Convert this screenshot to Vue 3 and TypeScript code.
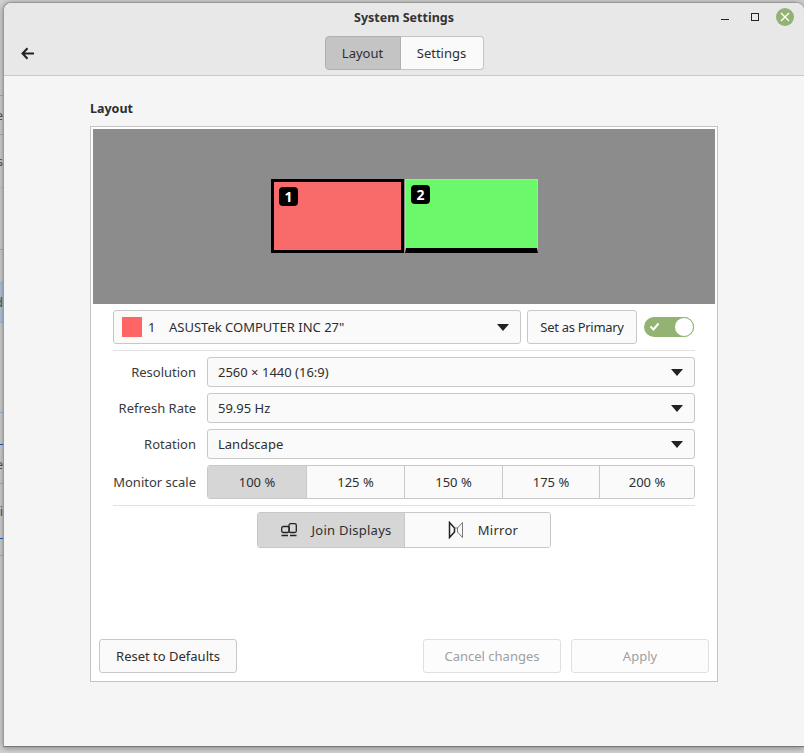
<script setup lang="ts">
import { ref } from 'vue';

interface Monitor {
  id: number;
  colour: string;
  left: number;
  active: boolean;
}

interface BehindRow {
  height: number;
  text: string;
  background?: string;
  line: string;
}

const monitors = ref<Monitor[]>([
  { id: 1, colour: '#f96b6b', left: 178, active: true },
  { id: 2, colour: '#6bf96b', left: 312, active: false },
]);

const scales = ['100 %', '125 %', '150 %', '175 %', '200 %'];
const currentScale = ref('100 %');

const rows = [
  { label: 'Resolution', value: '2560 × 1440 (16:9)' },
  { label: 'Refresh Rate', value: '59.95 Hz' },
  { label: 'Rotation', value: 'Landscape' },
];

// the window behind: only a few pixels of its list show at the left edge
const behind: BehindRow[] = [
  { height: 95, text: '', line: '#b0b0b0' },
  { height: 38, text: 'e', line: '#b0b0b0' },
  { height: 52, text: 's', line: '#c4c4c4' },
  { height: 61, text: '', line: '#b0b0b0' },
  { height: 32, text: '', line: '#a8bccf' },
  { height: 39, text: 'd', background: '#b5c9dc', line: '#a8bccf' },
  { height: 89, text: '', line: '#9dbbd8' },
  { height: 31, text: '', line: '#1a5fb4' },
  { height: 38, text: 'e', line: '#b0b0b0' },
  { height: 54, text: 'i', line: '#1a5fb4' },
  { height: 16, text: '', line: '#b0b0b0' },
];
</script>

<template>
  <div class="desktop">
    <div class="behind-left">
      <span
        v-for="(row, i) in behind"
        :key="i"
        class="behind-row"
        :style="{ height: row.height + 'px', lineHeight: row.height + 'px', background: row.background, borderBottomColor: row.line }"
      >{{ row.text }}</span>
    </div>
    <div class="window">
      <header class="titlebar">
        <div class="title-row">
          <span class="title">System Settings</span>
          <div class="controls">
            <span class="ctl-min"></span>
            <span class="ctl-max"></span>
            <span class="ctl-close">
              <svg width="12" height="12" viewBox="0 0 12 12">
                <path d="M2 2l8 8M10 2l-8 8" stroke="#fff" stroke-width="1.4" fill="none" />
              </svg>
            </span>
          </div>
        </div>
        <div class="tool-row">
          <svg class="back" width="13" height="13" viewBox="0 0 13 13">
            <path d="M13 6.500H1.500M6.500 1.200L1.500 6.500l5 5.300" stroke="#222" stroke-width="2" fill="none" />
          </svg>
          <div class="switcher">
            <button class="sw-btn on">Layout</button>
            <button class="sw-btn">Settings</button>
          </div>
        </div>
      </header>

      <main class="content">
        <p class="heading">Layout</p>
        <section class="frame">
          <div class="canvas">
            <div
              v-for="m in monitors"
              :key="m.id"
              class="monitor"
              :class="{ active: m.active }"
              :style="{ left: m.left + 'px', background: m.colour }"
            >
              <span class="badge">{{ m.id }}</span>
            </div>
          </div>

          <div class="settings">
            <div class="monitor-row">
              <div class="select monitor-select">
                <span class="swatch"></span>
                <span class="mon-num">1</span>
                <span class="mon-name">ASUSTek COMPUTER INC 27"</span>
                <span class="arrow"></span>
              </div>
              <button class="btn primary-btn">Set as Primary</button>
              <div class="switch">
                <svg class="check" width="11" height="9" viewBox="0 0 11 9">
                  <path d="M1.500 4.500l3 3 5-6" stroke="#fff" stroke-width="2" fill="none" />
                </svg>
                <span class="knob"></span>
              </div>
            </div>
            <hr class="sep" />
            <div v-for="r in rows" :key="r.label" class="form-row">
              <label class="form-label">{{ r.label }}</label>
              <div class="select">
                <span>{{ r.value }}</span>
                <span class="arrow"></span>
              </div>
            </div>
            <div class="form-row row-scale">
              <label class="form-label">Monitor scale</label>
              <div class="segments">
                <button
                  v-for="s in scales"
                  :key="s"
                  class="segment"
                  :class="{ on: s === currentScale }"
                >{{ s }}</button>
              </div>
            </div>
            <hr class="sep" />
            <div class="mode-row">
              <div class="modes">
                <button class="mode on">
                  <svg width="16" height="14" viewBox="0 0 16 14" fill="none" stroke="#222">
                    <rect x="0.700" y="3.500" width="7.500" height="6" rx="1.500" stroke-width="1.300" />
                    <rect x="8" y="0.700" width="7.300" height="8.800" rx="1.500" stroke-width="1.300" />
                    <path d="M0.500 12.500h6.500M9 12.500h6.500" stroke-width="1.500" />
                  </svg>
                  <span>Join Displays</span>
                </button>
                <button class="mode">
                  <svg width="16" height="18" viewBox="0 0 16 18" fill="none">
                    <path d="M1.500 1.500v15l5-5.500v-4zM6.500 7v4" stroke="#222" stroke-width="1.500" />
                    <path d="M14.500 1.500v15l-5-5.500v-4zM1.500 1.500h0M6.500 7L9.500 7" stroke="#777" stroke-width="1" />
                  </svg>
                  <span>Mirror</span>
                </button>
              </div>
            </div>
          </div>

          <footer class="footer">
            <button class="btn foot-btn">Reset to Defaults</button>
            <div class="foot-right">
              <button class="btn foot-btn" disabled>Cancel changes</button>
              <button class="btn foot-btn" disabled>Apply</button>
            </div>
          </footer>
        </section>
      </main>
    </div>
  </div>
</template>

<style>
html,
body {
  margin: 0;
  padding: 0;
  background: #c9c9c9;
}
</style>

<style scoped>
.desktop {
  display: flex;
  width: 804px;
  height: 753px;
  overflow: hidden;
  background: #d2d2d2;
  font-family: "Noto Sans", "Open Sans", sans-serif;
  font-size: 13px;
  color: #2e2e2e;
}

.behind-left {
  width: 3px;
  flex: none;
  direction: rtl;
  overflow: hidden;
  color: #555;
  font-size: 13px;
}

.behind-row {
  display: block;
  width: 3px;
  white-space: nowrap;
  border-bottom: 1px solid #b0b0b0;
}

.window {
  position: relative;
  flex: 1;
  margin: 2px 0 6px 0;
  display: flex;
  flex-direction: column;
  border: 1px solid #9a9a9a;
  border-right: none;
  border-bottom-color: #777;
  border-radius: 8px 8px 0 0;
  background: #f5f5f5;
  box-shadow: 0 1px 6px rgba(0, 0, 0, 0.4);
  box-sizing: border-box;
}

.titlebar {
  height: 73px;
  flex: none;
  box-sizing: border-box;
  background: #e8e8e8;
  border-bottom: 1px solid #c9c9c9;
  border-radius: 8px 8px 0 0;
  padding: 0 0 5px;
  display: flex;
  flex-direction: column;
}

.title-row {
  position: relative;
  height: 33px;
  box-sizing: border-box;
  padding-bottom: 4px;
  display: flex;
  align-items: center;
  justify-content: center;
}

.title {
  font-weight: 700;
  font-size: 12.5px;
  color: #333;
}

.controls {
  position: absolute;
  right: 10px;
  top: 5px;
  display: flex;
  align-items: center;
}

.ctl-min {
  width: 8px;
  height: 0;
  margin-top: 4px;
  border-top: 1px solid #222;
}

.ctl-max {
  width: 6px;
  height: 6px;
  margin-left: 22px;
  border: 1px solid #222;
}

.ctl-close {
  width: 18px;
  height: 18px;
  margin-left: 17px;
  border-radius: 50%;
  background: #92b372;
  display: flex;
  align-items: center;
  justify-content: center;
}

.tool-row {
  position: relative;
  flex: 1;
  display: flex;
  align-items: center;
  justify-content: center;
}

.back {
  position: absolute;
  left: 17px;
  top: 11px;
}

.switcher {
  display: flex;
}

.sw-btn {
  font: inherit;
  height: 34px;
  padding: 0;
  background: #fafafa;
  border: 1px solid #c4c4c4;
  color: #2e2e2e;
  width: 83px;
  border-radius: 0 4px 4px 0;
  border-left: none;
}

.sw-btn.on {
  width: 76px;
  background: #c4c4c4;
  border: 1px solid #b0b0b0;
  border-radius: 4px 0 0 4px;
}

.content {
  flex: 1;
  padding: 0 86px 0 86px;
  min-height: 0;
}

.heading {
  margin: 0;
  height: 50px;
  line-height: 16px;
  padding-top: 25px;
  box-sizing: border-box;
  font-weight: 700;
  font-size: 12.5px;
  color: #2e2e2e;
}

.frame {
  width: 628px;
  height: 556px;
  box-sizing: border-box;
  background: #fff;
  border: 1px solid #c4c4c4;
  padding: 2px;
  display: flex;
  flex-direction: column;
}

.canvas {
  position: relative;
  height: 175px;
  flex: none;
  background: #8c8c8c;
}

.monitor {
  position: absolute;
  top: 50px;
  width: 133px;
  height: 74px;
  box-sizing: border-box;
  border-top: 1px solid #c8c8c8;
  border-left: 1px solid #c8c8c8;
  border-right: 1px solid #c8c8c8;
  border-bottom: 5px solid #000;
}

.monitor.active {
  border: 3px solid #000;
}

.badge {
  position: absolute;
  left: 5px;
  top: 5px;
  width: 19px;
  height: 19px;
  border-radius: 4px;
  background: #000;
  color: #fff;
  font-weight: 700;
  font-size: 14px;
  line-height: 19px;
  text-align: center;
}

.settings {
  flex: 1;
  padding: 6px 20px 0;
}

.monitor-row {
  display: flex;
  align-items: center;
  height: 34px;
}

.select {
  flex: 1;
  height: 100%;
  box-sizing: border-box;
  display: flex;
  align-items: center;
  padding: 0 11px 0 10px;
  background: #fafafa;
  border: 1px solid #c8c8c8;
  border-radius: 3px;
  color: #2e2e2e;
}

.monitor-select {
  width: 408px;
  flex: none;
  padding-left: 8px;
}

.swatch {
  width: 20px;
  height: 20px;
  background: #ff6565;
  margin-right: 6px;
}

.mon-num {
  width: 21px;
}

.arrow {
  margin-left: auto;
  width: 0;
  height: 0;
  border-left: 6px solid transparent;
  border-right: 6px solid transparent;
  border-top: 7px solid #222;
}

.btn {
  font: inherit;
  background: #fafafa;
  border: 1px solid #c8c8c8;
  border-radius: 3px;
  color: #2e2e2e;
  padding: 0;
}

.primary-btn {
  width: 110px;
  height: 34px;
  margin-left: 6px;
  letter-spacing: -0.3px;
}

.switch {
  position: relative;
  width: 50px;
  height: 20px;
  margin-left: 7px;
  border-radius: 10px;
  background: #92b372;
}

.check {
  position: absolute;
  left: 5px;
  top: 5px;
}

.knob {
  position: absolute;
  right: 0;
  top: 0;
  width: 18px;
  height: 18px;
  border-radius: 50%;
  background: #fff;
  border: 1px solid #92b372;
}

.sep {
  margin: 6px 0;
  height: 1px;
  border: none;
  background: #e2e2e2;
}

.form-row {
  display: flex;
  align-items: center;
  height: 30px;
  margin-bottom: 6px;
}

.form-label {
  width: 83px;
  padding-right: 11px;
  text-align: right;
  color: #3a3a3a;
  white-space: nowrap;
  flex: none;
}

.row-scale {
  height: 34px;
  margin-bottom: 0;
}

.segments {
  flex: 1;
  height: 100%;
  display: grid;
  grid-template-columns: 98px 98px 98px 97px 95px;
  border: 1px solid #c8c8c8;
  border-radius: 3px;
  overflow: hidden;
  box-sizing: border-box;
}

.segment {
  font: inherit;
  color: #2e2e2e;
  background: #fafafa;
  border: none;
  border-left: 1px solid #c8c8c8;
  padding: 0;
}

.segment:first-child {
  border-left: none;
}

.segment.on {
  background: #d6d6d6;
}

.mode-row {
  display: flex;
  justify-content: center;
}

.modes {
  display: grid;
  grid-template-columns: 147px 145px;
  height: 36px;
  border: 1px solid #c8c8c8;
  border-radius: 3px;
  overflow: hidden;
  box-sizing: border-box;
}

.mode {
  font: inherit;
  color: #2e2e2e;
  background: #fafafa;
  border: none;
  padding: 0 0 0 11px;
  letter-spacing: 0.25px;
  display: flex;
  align-items: center;
  justify-content: center;
  gap: 14px;
}

.mode.on {
  background: #d6d6d6;
  border-right: 1px solid #c8c8c8;
}

.footer {
  display: flex;
  justify-content: space-between;
  padding: 0 6px 6px;
}

.foot-btn {
  width: 138px;
  height: 34px;
}

.foot-right {
  display: flex;
  gap: 10px;
}

.foot-btn:disabled {
  color: #a0a0a0;
  border-color: #e0e0e0;
  background: #fcfcfc;
}
</style>
